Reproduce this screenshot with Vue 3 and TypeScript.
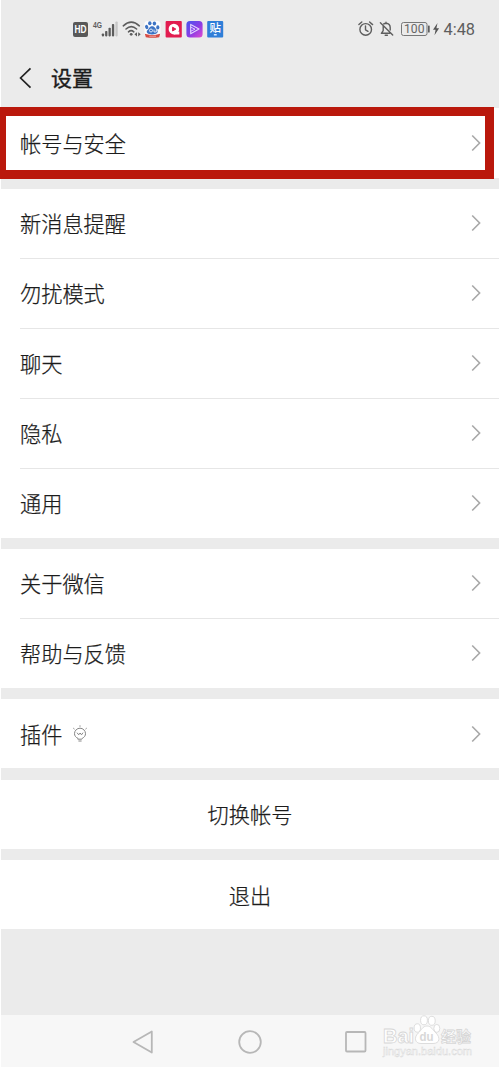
<script setup lang="ts">
interface Row {
  label: string
  bulb?: boolean
}
interface Group {
  name: string
  rows: Row[]
}

const groups: Group[] = [
  { name: 'account', rows: [{ label: '帐号与安全' }] },
  {
    name: 'general',
    rows: [
      { label: '新消息提醒' },
      { label: '勿扰模式' },
      { label: '聊天' },
      { label: '隐私' },
      { label: '通用' },
    ],
  },
  { name: 'about', rows: [{ label: '关于微信' }, { label: '帮助与反馈' }] },
  { name: 'plugins', rows: [{ label: '插件', bulb: true }] },
]
</script>

<template>
  <div class="screen">
    <header class="status">
      <svg class="status-left" width="165" height="24" viewBox="70 17 165 24">
        <rect x="73" y="22" width="15" height="15" rx="2" fill="#595959" />
        <text x="74.6" y="33.2" class="hd" textLength="12" lengthAdjust="spacingAndGlyphs">HD</text>
        <text x="93" y="28" class="net" textLength="9" lengthAdjust="spacingAndGlyphs">4G</text>
        <g fill="#5c5c5c">
          <rect x="101.8" y="33.4" width="2.3" height="3" rx=".8" />
          <rect x="105.1" y="31" width="2.3" height="5.4" rx=".8" />
          <rect x="108.5" y="27.8" width="2.3" height="8.6" rx=".8" />
          <rect x="111.9" y="24" width="2.3" height="12.4" rx=".8" />
          <rect x="115.4" y="21.5" width="2.3" height="14.9" rx=".8" fill="#c6c6c6" />
        </g>
        <g fill="none" stroke="#5c5c5c" stroke-width="1.6" stroke-linecap="round">
          <path d="M123.3 25.8Q131.3 18.6 139.3 25.8M126 29Q131.3 24.2 136.6 29M128.5 31.8Q131.2 29.5 133.8 31.8" />
        </g>
        <circle cx="131.2" cy="34.3" r="1.4" fill="#5c5c5c" />
        <path d="M137 32.2V36.4L134.4 34.3ZM138.2 32.2V36.4L140.7 34.3Z" fill="#5c5c5c" />

        <rect x="144.5" y="21" width="16" height="16" rx="3" fill="#fbfbfd" />
        <g fill="#3c73c4">
          <ellipse cx="146.7" cy="27" rx="1.6" ry="2.2" transform="rotate(-20 146.7 27)" />
          <ellipse cx="149.8" cy="23.3" rx="1.7" ry="2" />
          <ellipse cx="154.4" cy="23.5" rx="1.7" ry="2.1" />
          <ellipse cx="157.8" cy="27.4" rx="1.6" ry="2.1" />
          <path d="M152 26.2C149.3 26.2 149 29 147.3 30.3C145.7 32 147.5 34.6 152 34.4C156.8 34.6 158.8 32 157.2 30.3C155.3 28.8 155 26.2 152 26.2Z" />
        </g>
        <circle cx="151" cy="30.5" r="1.5" fill="none" stroke="#fff" stroke-width=".8" />
        <path d="M154 29.5V32H156.3V29.5" fill="none" stroke="#fff" stroke-width=".8" />
        <path d="M144.8 33.8L148 34.4Q152.5 35.8 157 34.4L160.2 33.8L159.2 37.3Q152.5 38.3 145.8 37.3Z" fill="#d64b43" />
        <path d="M149.3 36.2H156" stroke="#f4c2bd" stroke-width=".8" />

        <rect x="165.6" y="21" width="16.2" height="16.4" rx="1" fill="#e21c50" />
        <circle cx="173.9" cy="29.1" r="5.3" fill="#fff" />
        <path d="M174 32.5L179.3 31.4V34.5H174Z" fill="#fff" />
        <path d="M172.6 27.2L175.8 29.1L172.6 31Z" fill="#e21c50" stroke="#e21c50" stroke-linejoin="round" />

        <defs>
          <linearGradient id="violet" x1="0" y1="0" x2="1" y2="1">
            <stop offset="0" stop-color="#4656ef" />
            <stop offset=".55" stop-color="#8d3ce4" />
            <stop offset="1" stop-color="#e14ccf" />
          </linearGradient>
        </defs>
        <rect x="186.4" y="21" width="16.2" height="16.4" rx="3.5" fill="url(#violet)" />
        <path d="M190.7 24.4L199 29.1L190.7 33.8Z" fill="none" stroke="#e5d5ff" stroke-width="1.1" stroke-linejoin="round" />
        <path d="M190.5 27L195 29.2L190.5 31.3" fill="none" stroke="#e5d5ff" stroke-width=".9" />

        <rect x="207.2" y="21" width="16" height="16.4" rx="1" fill="#2f7ed8" />
        <text x="209.4" y="32.4" class="tie">贴</text>
        <rect x="213.8" y="34" width="3" height="1.6" rx=".5" fill="#d9eaff" />
      </svg>

      <svg class="status-right" width="125" height="24" viewBox="355 17 125 24">
        <g fill="none" stroke="#5e5e5e" stroke-width="1.4" stroke-linecap="round" stroke-linejoin="round">
          <circle cx="365.7" cy="29.4" r="5.8" />
          <path d="M365.5 26V29.8L368 31.3M358.9 24.6L361.8 22M369.6 22L372.6 24.6" />
          <path d="M383.2 25.7V30.6L381.4 33.3H389.8M383.8 23.9Q384.6 23.3 386 23.2Q390.2 23.6 390.2 27.5V30M386 22.2V23M385.2 35.2H387.4M380.4 22.8L392.7 35.1" />
        </g>
        <rect x="401.5" y="22.5" width="25.5" height="13" rx="2" fill="none" stroke="#777" />
        <rect x="428" y="25.5" width="1.7" height="7" rx=".6" fill="#5e5e5e" />
        <text x="404" y="33.3" class="battery" textLength="20.5" lengthAdjust="spacingAndGlyphs">100</text>
        <path d="M437.5 23L433 29.8H435.6L434.5 35.2L439.1 28.2H436.4Z" fill="#555" />
        <text x="443.5" y="35.3" class="clock" textLength="31.5" lengthAdjust="spacingAndGlyphs">4:48</text>
      </svg>
    </header>

    <div class="titlebar">
      <svg width="14" height="24" viewBox="0 0 14 24">
        <path d="M12.5 2.4L2.6 12L12.5 21.6" fill="none" stroke="#222" stroke-width="1.7" />
      </svg>
      <h1>设置</h1>
    </div>

    <section v-for="group in groups" :key="group.name" class="group" :class="group.name">
      <div v-for="row in group.rows" :key="row.label" class="row">
        <span>{{ row.label }}</span>
        <svg v-if="row.bulb" class="bulb" width="16" height="18" viewBox="0 0 16 18">
          <g fill="none" stroke="#858585" stroke-width="1" stroke-linecap="round" stroke-linejoin="round">
            <path d="M5.6 13.2C3.7 12.3 2.5 10.7 2.5 8.7A5.5 5.5 0 0 1 13.5 8.7C13.5 10.7 12.3 12.3 10.4 13.2L9.8 14.2H6.2Z" />
            <path d="M5.3 8L6.7 9.8L8.1 8L9.5 9.8L10.8 8M6.8 16H9.2M8 .8V1.3M1.6 3.4L2.2 3.9M14.4 3.4L13.8 3.9" />
          </g>
        </svg>
        <svg class="chevron" width="10" height="18" viewBox="0 0 10 18">
          <path d="M1.2 1.5L8.6 9L1.2 16.5" fill="none" stroke="#a8a8a8" stroke-width="1.6" />
        </svg>
      </div>
    </section>

    <button class="action switch">切换帐号</button>
    <button class="action exit">退出</button>

    <nav class="nav">
      <svg width="22" height="26" viewBox="0 0 22 26">
        <path d="M19.8 2.5V23.5L1.5 13Z" />
      </svg>
      <svg width="26" height="26" viewBox="0 0 26 26"><circle cx="13" cy="13" r="10.8" /></svg>
      <svg width="22" height="26" viewBox="0 0 22 26"><rect x="1" y="3" width="19.5" height="19.5" rx="1" /></svg>
    </nav>

    <svg class="watermark" width="100" height="48" viewBox="380 1012 100 48">
      <g class="mark">
        <text x="383" y="1043" class="brand" textLength="31" lengthAdjust="spacingAndGlyphs">Bai</text>
        <ellipse cx="417.3" cy="1028" rx="3.2" ry="4.2" />
        <ellipse cx="424" cy="1020.3" rx="3.4" ry="4.5" />
        <ellipse cx="431.8" cy="1020.8" rx="3.4" ry="4.5" />
        <ellipse cx="436.8" cy="1028.4" rx="3" ry="4" />
        <path d="M427 1026C422.5 1026 421.8 1030 418.3 1033C413.5 1037.5 415 1043.5 421 1043.5H433C440 1043.5 440.5 1037.5 436 1033C432.5 1030 431.5 1026 427 1026Z" />
        <text x="419.5" y="1041" class="du" textLength="14" lengthAdjust="spacingAndGlyphs">du</text>
        <text x="441" y="1042" class="jingyan" textLength="30" lengthAdjust="spacingAndGlyphs">经验</text>
        <text x="383" y="1055" class="site" textLength="89" lengthAdjust="spacingAndGlyphs">jingyan.baidu.com</text>
      </g>
    </svg>
    <div class="highlight"></div>
  </div>
</template>

<style>
body {
  margin: 0;
  background: #fff;
}
</style>

<style scoped>
.screen {
  position: relative;
  box-sizing: border-box;
  width: 500px;
  height: 1069px;
  display: flex;
  flex-direction: column;
  background: #ebebeb;
  border: solid #fff;
  border-width: 0 1px 2px;
  font-family: "Noto Sans CJK SC", sans-serif;
  color: #1c1c1c;
}
.status {
  display: flex;
  justify-content: space-between;
  padding: 17px 19px 0 69px;
  height: 31px;
  flex: none;
}
.titlebar {
  display: flex;
  align-items: center;
  height: 60px;
  flex: none;
  padding-left: 17px;
}
h1 {
  margin: 0 0 2px 19px;
  font-size: 21px;
  line-height: 30px;
  font-weight: 400;
  -webkit-text-stroke: 0.4px #1c1c1c;
}
.group {
  flex: none;
  margin-bottom: 11px;
  background: #fff;
}
.plugins {
  margin-bottom: 12px;
}
.row {
  display: flex;
  align-items: center;
  box-sizing: border-box;
  height: 70px;
  margin-left: 19px;
  padding: 0 18px 1px 0;
  font-size: 21.2px;
  font-weight: 300;
  line-height: 30px;
  -webkit-text-stroke: 0.25px #1c1c1c;
}
.row + .row {
  border-top: 1px solid #e6e6e6;
}
.account .row,
.plugins .row {
  padding-bottom: 0;
}
.general .row:first-child,
.about .row:first-child,
.plugins .row {
  height: 69px;
}
.bulb {
  margin-left: 10px;
}
.chevron {
  margin-left: auto;
}
.action {
  flex: none;
  height: 69px;
  margin: 0;
  padding: 0 0 1px;
  border: 0;
  background: #fff;
  color: inherit;
  font: 300 21.2px/30px "Noto Sans CJK SC", sans-serif;
  -webkit-text-stroke: 0.25px #1c1c1c;
}
.switch {
  margin-bottom: 11px;
}
.exit {
  padding: 1px 0 0;
}
.nav {
  display: flex;
  align-items: center;
  justify-content: space-between;
  height: 52px;
  margin-top: auto;
  flex: none;
  box-sizing: border-box;
  padding: 2px 132px 0 131px;
  background: #f7f7f7;
}
.nav svg {
  fill: none;
  stroke: #b7b7b7;
  stroke-width: 1.8;
  stroke-linejoin: round;
}
.highlight {
  position: absolute;
  top: 107px;
  left: -1px;
  box-sizing: border-box;
  width: 494px;
  height: 72px;
  border: 9px solid #ba180c;
  border-left-width: 6px;
}
.watermark {
  position: absolute;
  left: 379px;
  top: 1012px;
}
.mark {
  fill: #fff;
  stroke: #d6d6d6;
  stroke-width: 0.8;
}
.brand {
  font: bold 20px "Liberation Sans", sans-serif;
}
.du {
  font: bold 13px "Liberation Sans", sans-serif;
  fill: #d8d8d8;
  stroke: none;
}
.jingyan {
  font: bold 15px "Noto Sans CJK SC", sans-serif;
}
.site {
  font: 10px "Liberation Sans", sans-serif;
  stroke-width: 0.4;
}
.hd {
  font: bold 10px "Liberation Sans", sans-serif;
  fill: #fff;
}
.net {
  font: bold 8.5px "Liberation Sans", sans-serif;
  fill: #5c5c5c;
}
.tie {
  font: 500 11.5px "Noto Sans CJK SC", sans-serif;
  fill: #fff;
}
.battery {
  font: 12px Roboto, sans-serif;
  fill: #666;
}
.clock {
  font: 17px Roboto, sans-serif;
  fill: #5e5e5e;
}
</style>
